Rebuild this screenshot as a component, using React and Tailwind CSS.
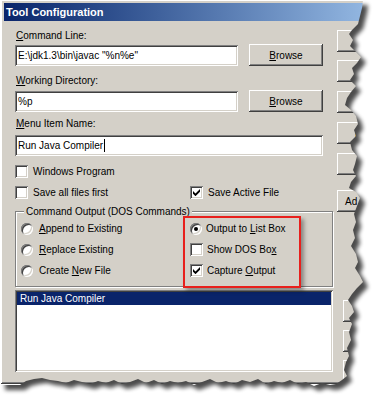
import React from "react";

const sunken =
  "shadow-[inset_1px_1px_#808080,inset_-1px_-1px_#ffffff,inset_2px_2px_#404040,inset_-2px_-2px_#d4d0c8]";
const raised =
  "shadow-[inset_-1px_-1px_#404040,inset_1px_1px_#ffffff,inset_-2px_-2px_#808080,inset_2px_2px_#d4d0c8]";

// torn paper edge of the screenshot (right side, then bottom)
const edge = [
  [363, 0], [362, 8], [360, 16], [358, 24], [352, 30], [349, 34], [353, 40], [350, 46],
  [356, 52], [361, 57], [357, 63], [352, 68], [354, 74], [350, 80], [356, 86], [351, 92],
  [347, 98], [345, 105], [351, 110], [356, 116], [358, 124], [354, 130], [356, 136],
  [350, 142], [352, 150], [357, 156], [355, 164], [353, 170], [356, 176], [351, 182],
  [349, 188], [356, 192], [360, 198], [357, 206], [354, 214], [356, 222], [353, 230],
  [355, 238], [351, 246], [356, 254], [358, 262], [355, 268], [360, 276], [363, 282],
  [357, 288], [352, 294], [348, 300], [352, 306], [354, 312], [349, 318], [352, 324],
  [349, 332], [351, 340], [347, 348], [349, 356], [346, 362], [344, 370], [347, 376],
  [342, 380], [336, 384], [330, 385], [322, 383], [314, 386], [306, 382], [298, 384],
  [290, 380], [282, 383], [274, 381], [266, 384], [258, 379], [250, 382], [242, 380],
  [234, 384], [226, 381], [218, 383], [210, 379], [202, 382], [194, 385], [186, 381],
  [178, 383], [170, 381], [162, 384], [154, 380], [146, 383], [138, 379], [130, 382],
  [122, 384], [114, 380], [106, 383], [98, 381], [90, 384], [82, 382], [74, 380],
  [66, 383], [58, 381], [50, 380], [42, 378], [34, 379], [26, 381], [20, 385], [0, 385],
];
const tornPath = "M0 0 " + edge.map(([x, y]) => `L${x} ${y}`).join(" ") + " Z";

function TornEdge() {
  return (
    <svg className="absolute left-0 top-0 pointer-events-none" width="376" height="399">
      <defs>
        <filter id="blur" x="-10%" y="-10%" width="120%" height="120%">
          <feGaussianBlur stdDeviation="2" />
        </filter>
        <mask id="outside">
          <rect width="376" height="399" fill="#fff" />
          <path d={tornPath} fill="#000" />
        </mask>
      </defs>
      <g mask="url(#outside)">
        <rect width="376" height="399" fill="#fff" />
        <path d={tornPath} transform="translate(5 5)" fill="#000" opacity="0.7" filter="url(#blur)" />
      </g>
    </svg>
  );
}

function Check({ checked }) {
  return (
    <span className={`relative w-[13px] h-[13px] shrink-0 bg-white ${sunken}`}>
      {checked && (
        <svg className="absolute left-[3px] top-[3px]" width="7" height="7" viewBox="0 0 7 7">
          <polygon points="0,2 2.5,4.5 7,0 7,2.8 2.5,7.2 0,4.7" fill="#000" />
        </svg>
      )}
    </span>
  );
}

function Radio({ on }) {
  return (
    <span className={`flex items-center justify-center w-[12px] h-[12px] shrink-0 rounded-full bg-white ${sunken}`}>
      {on && <span className="w-[4px] h-[4px] rounded-full bg-black" />}
    </span>
  );
}

function Browse() {
  return (
    <button className={`w-[74px] h-[22px] bg-[#d4d0c8] ${raised} text-black`}>
      <span className="underline">B</span>rowse
    </button>
  );
}

// only the first letters peek out past the torn edge
const sideButtons = [
  { label: "", cls: "mt-[9px] ml-[4px] w-[38px] pl-[30px]" },
  { label: "C", cls: "mt-[8px] ml-[4px] w-[38px] pl-[21px]" },
  { label: "", cls: "mt-[9px] ml-[4px] w-[38px] pl-[26px]" },
  { label: "H", cls: "mt-[9px] ml-[4px] w-[38px] pl-[18px]" },
  { label: "I", cls: "mt-[9px] ml-[4px] w-[38px] pl-[21px]" },
  { label: "Ad", cls: "mt-[15px] ml-[4px] w-[38px] pl-[8px]" },
  { label: "", cls: "mt-[88px] ml-[10px] w-[32px] pl-[20px]" },
  { label: "", cls: "mt-[8px] ml-[10px] w-[32px] pl-[20px]" },
  { label: "", cls: "mt-[8px] ml-[10px] w-[32px] pl-[20px]" },
];

export default function App() {
  return (
    <div className="relative w-[376px] h-[399px] overflow-hidden bg-white font-['Liberation_Sans',Arial,sans-serif] text-[10px] leading-[13px] text-black">
      {/* dialog window */}
      <div className={`ml-[1px] w-[375px] h-[384px] p-[3px] bg-[#d4d0c8] overflow-hidden ${raised}`}>
        <div className="h-[18px] flex items-center pl-[2px] bg-linear-to-r from-[#0a246a] from-0% to-[#a6caf0] to-110% text-white text-[11px] font-bold">
          Tool Configuration
        </div>

        <div className="flex">
          {/* main column */}
          <div className="ml-[11px] w-[318px] shrink-0 flex flex-col">
            <div className="mt-[8px] pl-[1px]">
              <span className="underline">C</span>ommand Line:
            </div>
            <div className="mt-[2px] h-[22px] flex items-start gap-[11px]">
              <div className={`mt-[1px] w-[223px] h-[21px] flex items-center pl-[3px] bg-white ${sunken}`}>
                E:\jdk1.3\bin\javac "%n%e"
              </div>
              <Browse />
            </div>

            <div className="mt-[8px] pl-[1px]">
              <span className="underline">W</span>orking Directory:
            </div>
            <div className="mt-[3px] h-[22px] flex items-start gap-[11px]">
              <div className={`mt-[1px] w-[223px] h-[21px] flex items-center pl-[3px] bg-white ${sunken}`}>
                %p
              </div>
              <Browse />
            </div>

            <div className="mt-[5px] pl-[1px]">
              <span className="underline">M</span>enu Item Name:
            </div>
            <div className={`mt-[5px] w-[308px] h-[21px] flex items-center pl-[3px] bg-white ${sunken}`}>
              Run Java Compiler
              <span className="ml-[1px] w-[1px] h-[13px] bg-black" />
            </div>

            <div className="mt-[9px] h-[13px] flex items-center gap-[5px]">
              <Check />
              <span>Windows Program</span>
            </div>
            <div className="mt-[8px] h-[13px] flex items-center">
              <div className="w-[175px] flex items-center gap-[5px]">
                <Check />
                <span>Save all files first</span>
              </div>
              <div className="flex items-center gap-[5px]">
                <Check checked />
                <span>Save Active File</span>
              </div>
            </div>

            {/* group box */}
            <div className="relative mt-[12px] h-[76px] border border-[#808080] shadow-[inset_1px_1px_#ffffff,1px_1px_#ffffff]">
              <span className="absolute left-[8px] -top-[7px] px-[2px] bg-[#d4d0c8]">
                Command Output (DOS Commands)
              </span>
              <div className="pt-[6px] pl-[5px] grid grid-cols-[169px_1fr]">
                <div className="h-[21px] flex items-center gap-[6px]">
                  <Radio />
                  <span><span className="underline">A</span>ppend to Existing</span>
                </div>
                <div className="h-[21px] flex items-center gap-[4px]">
                  <Radio on />
                  <span>Output to <span className="underline">L</span>ist Box</span>
                </div>
                <div className="h-[21px] flex items-center gap-[6px]">
                  <Radio />
                  <span><span className="underline">R</span>eplace Existing</span>
                </div>
                <div className="h-[21px] flex items-center gap-[4px]">
                  <Check />
                  <span>Show DOS Bo<span className="underline">x</span></span>
                </div>
                <div className="h-[21px] flex items-center gap-[6px]">
                  <Radio />
                  <span>Create <span className="underline">N</span>ew File</span>
                </div>
                <div className="h-[21px] flex items-center gap-[4px]">
                  <Check checked />
                  <span>Capture <span className="underline">O</span>utput</span>
                </div>
              </div>
              {/* red annotation */}
              <div className="absolute left-[167px] top-[4px] w-[118px] h-[72px] border-2 border-[#e8201c] shadow-[3px_3px_4px_rgba(0,0,0,0.35)]" />
            </div>

            {/* list box */}
            <div className={`mt-[3px] h-[82px] p-[2px] bg-white ${sunken}`}>
              <div className="h-[13px] pl-[3px] bg-[#0a246a] text-white leading-[13px]">Run Java Compiler</div>
            </div>
          </div>

          {/* side buttons, mostly cut off by the torn edge */}
          <div className="flex flex-col">
            {sideButtons.map((b, i) => (
              <button
                key={i}
                className={`h-[22px] shrink-0 text-left bg-[#d4d0c8] ${raised} ${b.cls}`}
              >
                {b.label}
              </button>
            ))}
          </div>
        </div>
      </div>

      <TornEdge />
    </div>
  );
}
